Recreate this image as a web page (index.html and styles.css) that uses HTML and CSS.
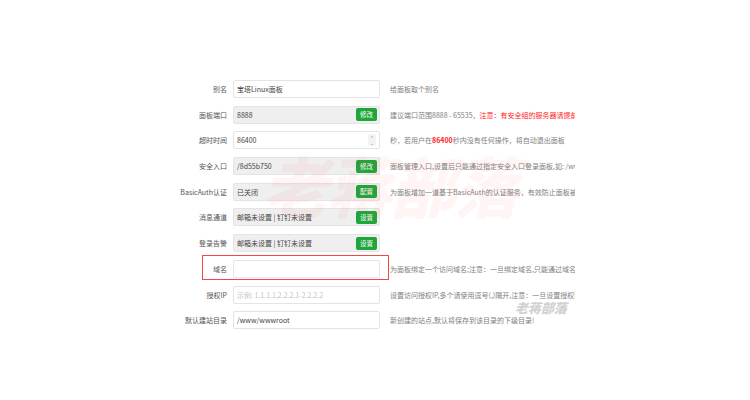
FILE: index.html
```html
<!DOCTYPE html>
<html lang="zh-CN">
<head>
    <meta charset="UTF-8">
    <meta name="viewport" content="width=device-width, initial-scale=1.0">
    <title>面板设置</title>
    <link rel="stylesheet" href="styles.css">
</head>
<body>
    <div class="page">
        <div class="settings">
            <div class="row">
                <label class="label">别名</label>
                <div class="field"><span class="value">宝塔Linux面板</span></div>
                <div class="help">给面板取个别名</div>
            </div>
            <div class="row">
                <label class="label">面板端口</label>
                <div class="field readonly"><span class="value">8888</span><span class="btn">修改</span></div>
                <div class="help">建议端口范围8888 - 65535，<span class="warn">注意：有安全组的服务器请提前放行新端口</span></div>
            </div>
            <div class="row">
                <label class="label">超时时间</label>
                <div class="field"><span class="value">86400</span><span class="spin"><i>&#8963;</i><i>&#8964;</i></span></div>
                <div class="help">秒，若用户在<span class="warn bold">86400</span>秒内没有任何操作，将自动退出面板</div>
            </div>
            <div class="row">
                <label class="label">安全入口</label>
                <div class="field readonly"><span class="value">/8d55b750</span><span class="btn">修改</span></div>
                <div class="help">面板管理入口,设置后只能通过指定安全入口登录面板,如: /www_bt</div>
            </div>
            <div class="row">
                <label class="label">BasicAuth认证</label>
                <div class="field readonly"><span class="value">已关闭</span><span class="btn">配置</span></div>
                <div class="help">为面板增加一道基于BasicAuth的认证服务，有效防止面板被扫描</div>
            </div>
            <div class="row">
                <label class="label">消息通道</label>
                <div class="field readonly"><span class="value">邮箱未设置 | 钉钉未设置</span><span class="btn">设置</span></div>
                <div class="help"></div>
            </div>
            <div class="row">
                <label class="label">登录告警</label>
                <div class="field readonly"><span class="value">邮箱未设置 | 钉钉未设置</span><span class="btn">设置</span></div>
                <div class="help"></div>
            </div>
            <div class="row">
                <label class="label">域名</label>
                <div class="field"><span class="value"></span></div>
                <div class="help">为面板绑定一个访问域名;注意：一旦绑定域名,只能通过域名访问面板</div>
            </div>
            <div class="row">
                <label class="label">授权IP</label>
                <div class="field"><span class="value placeholder">示例: 1.1.1.1,2.2.2.1-2.2.2.2</span></div>
                <div class="help">设置访问授权IP,多个请使用逗号(,)隔开,注意：一旦设置授权IP,只能通过指定IP访问面板</div>
            </div>
            <div class="row">
                <label class="label">默认建站目录</label>
                <div class="field"><span class="value">/www/wwwroot</span></div>
                <div class="help">新创建的站点,默认将保存到该目录的下级目录!</div>
            </div>

            <div class="mark-box"></div>
            <div class="watermark">老蒋部落</div>
            <div class="watermark-small">老蒋部落</div>
        </div>
    </div>
</body>
</html>
```

FILE: styles.css
```css
body {
    margin: 0;
    padding: 0;
    background-color: #fff;
    font-family: "Noto Sans CJK SC", "Noto Sans", sans-serif;
}
.page {
    width: 750px;
    height: 400px;
    padding-top: 80px;
    box-sizing: border-box;
}
.settings {
    position: relative;
    display: flex;
    flex-direction: column;
    gap: 7.7px;
    margin-left: 150px;
    width: 430px;
}
.row {
    display: flex;
    align-items: center;
    height: 18px;
}
.label {
    width: 77px;
    text-align: right;
    font-size: 7px;
    color: #555;
    white-space: nowrap;
}
.field {
    margin-left: 6px;
    width: 147px;
    height: 18px;
    box-sizing: border-box;
    border: 1px solid #e4e4e4;
    border-radius: 2px;
    background-color: #fff;
    display: flex;
    align-items: center;
    justify-content: space-between;
    padding: 0 2px 0 3px;
}
.field.readonly {
    background-color: #efefef;
}
.value {
    font-size: 7px;
    color: #444;
    white-space: nowrap;
}
.value.placeholder {
    color: #c4c4c4;
}
.btn {
    background-color: #20a53a;
    color: #fff;
    font-size: 6.5px;
    line-height: 13px;
    height: 13px;
    padding: 0 4px;
    border-radius: 2px;
}
.spin {
    display: flex;
    flex-direction: column;
    align-items: center;
    justify-content: center;
    width: 8px;
    height: 12px;
    background-color: #f3f3f3;
    border-radius: 2px;
    margin-right: 1px;
}
.spin i {
    font-style: normal;
    font-size: 5px;
    line-height: 5px;
    color: #888;
}
.help {
    margin-left: 10px;
    width: 185px;
    overflow: hidden;
    white-space: nowrap;
    font-size: 7px;
    color: #808080;
}
.warn {
    color: #f22;
}
.bold {
    font-weight: bold;
}
.mark-box {
    position: absolute;
    left: 52px;
    top: 175px;
    width: 187px;
    height: 25px;
    box-sizing: border-box;
    border: 1.5px solid #f04848;
}
.watermark {
    position: absolute;
    left: 112px;
    top: 56px;
    font-size: 66px;
    font-weight: 900;
    font-style: italic;
    color: rgba(255, 60, 60, 0.05);
    letter-spacing: -2px;
    white-space: nowrap;
    pointer-events: none;
}
.watermark-small {
    position: absolute;
    left: 365px;
    top: 218px;
    font-size: 13px;
    font-weight: 900;
    font-style: italic;
    color: #d2d2d2;
    white-space: nowrap;
}
```
